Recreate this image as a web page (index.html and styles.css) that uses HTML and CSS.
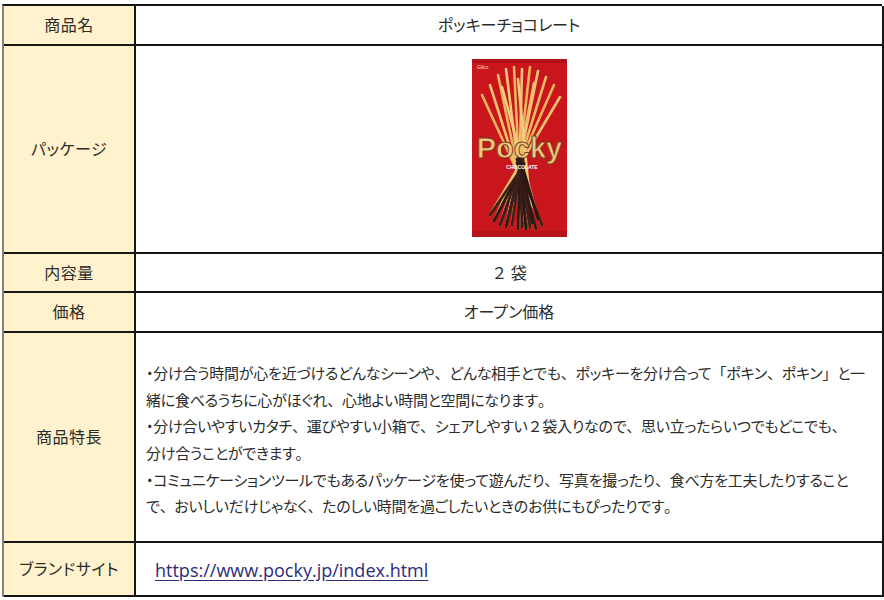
FILE: index.html
```html
<!DOCTYPE html>
<html lang="ja">
<head>
<meta charset="utf-8">
<title>ポッキーチョコレート</title>
<link rel="stylesheet" href="styles.css">
</head>
<body>
<div class="spec">
  <div class="label row-name">商品名</div>
  <div class="value center row-name">ポッキーチョコレート</div>

  <div class="label row-pkg">パッケージ</div>
  <div class="value center row-pkg">
    <svg class="pkg" width="95" height="178" viewBox="0 0 95 178" aria-label="Pocky package">
      <rect x="0" y="0" width="95" height="178" fill="#c9161d"/>
      <rect x="0" y="0" width="95" height="4" fill="#b01218"/>
      <rect x="0" y="172" width="95" height="6" fill="#b51319"/>
      <g stroke-linecap="round" stroke-width="2.6">
        <line x1="10" y1="36" x2="70" y2="166" stroke="#e8b45a"/>
        <line x1="18" y1="26" x2="64" y2="170" stroke="#f0c070"/>
        <line x1="26" y1="16" x2="58" y2="168" stroke="#e9b862"/>
        <line x1="34" y1="10" x2="54" y2="170" stroke="#f2c77a"/>
        <line x1="42" y1="8" x2="50" y2="168" stroke="#eab55d"/>
        <line x1="50" y1="10" x2="46" y2="170" stroke="#f0c274"/>
        <line x1="58" y1="8" x2="40" y2="166" stroke="#e7b25a"/>
        <line x1="66" y1="12" x2="34" y2="168" stroke="#f1c576"/>
        <line x1="74" y1="18" x2="28" y2="166" stroke="#ebb962"/>
        <line x1="82" y1="26" x2="22" y2="162" stroke="#e9b45a"/>
        <line x1="88" y1="38" x2="18" y2="156" stroke="#efbf6e"/>
        <line x1="30" y1="28" x2="66" y2="160" stroke="#f3ca80"/>
        <line x1="62" y1="24" x2="36" y2="160" stroke="#efbf6e"/>
        <line x1="46" y1="20" x2="60" y2="164" stroke="#f3ca80"/>
      </g>
      <g stroke-linecap="round" stroke-width="2.8">
        <line x1="45" y1="104" x2="70" y2="166" stroke="#3a1f1a"/>
        <line x1="45" y1="100" x2="64" y2="170" stroke="#2e1814"/>
        <line x1="46" y1="100" x2="58" y2="168" stroke="#3d2119"/>
        <line x1="47" y1="98" x2="54" y2="170" stroke="#2a1612"/>
        <line x1="48" y1="100" x2="50" y2="168" stroke="#3a1f1a"/>
        <line x1="48" y1="98" x2="46" y2="170" stroke="#2e1814"/>
        <line x1="49" y1="100" x2="40" y2="166" stroke="#3d2119"/>
        <line x1="50" y1="100" x2="34" y2="168" stroke="#2a1612"/>
        <line x1="51" y1="100" x2="28" y2="166" stroke="#3a1f1a"/>
        <line x1="52" y1="104" x2="22" y2="162" stroke="#2e1814"/>
        <line x1="52" y1="106" x2="18" y2="156" stroke="#3d2119"/>
        <line x1="50" y1="106" x2="66" y2="160" stroke="#2a1612"/>
        <line x1="49" y1="106" x2="36" y2="160" stroke="#3a1f1a"/>
        <line x1="49" y1="104" x2="60" y2="164" stroke="#2e1814"/>
      </g>
      <text x="5" y="10" font-family="Liberation Sans, sans-serif" font-size="5" font-style="italic" fill="#f5e0c0">Glico</text>
      <text x="47.5" y="99" text-anchor="middle" font-family="Liberation Sans, sans-serif" font-weight="bold" font-size="29" fill="#f1c77e" stroke="#7a3b1a" stroke-width="0.9">Pocky</text>
      <text x="50" y="110" text-anchor="middle" font-family="Liberation Sans, sans-serif" font-weight="bold" font-size="5" fill="#ffffff">CHOCOLATE</text>
    </svg>
  </div>

  <div class="label row-qty">内容量</div>
  <div class="value center-plain row-qty">２ 袋</div>

  <div class="label row-price">価格</div>
  <div class="value center row-price">オープン価格</div>

  <div class="label row-feat">商品特長</div>
  <div class="value feat row-feat">
    <p>・分け合う時間が心を近づけるどんなシーンや<span class="p">、</span>どんな相手とでも<span class="p">、</span>ポッキーを分け合って<span class="p">「</span>ポキン<span class="p">、</span>ポキン<span class="p">」</span>と一<br>緒に食べるうちに心がほぐれ<span class="p">、</span>心地よい時間と空間になります<span class="p">。</span><br>・分け合いやすいカタチ<span class="p">、</span>運びやすい小箱で<span class="p">、</span>シェアしやすい<span class="p">２</span>袋入りなので<span class="p">、</span>思い立ったらいつでもどこでも<span class="p">、</span><br>分け合うことができます<span class="p">。</span><br>・コミュニケーションツールでもあるパッケージを使って遊んだり<span class="p">、</span>写真を撮ったり<span class="p">、</span>食べ方を工夫したりすること<br>で<span class="p">、</span>おいしいだけじゃなく<span class="p">、</span>たのしい時間を過ごしたいときのお供にもぴったりです<span class="p">。</span></p>
  </div>

  <div class="label row-site">ブランドサイト</div>
  <div class="value site row-site"><a class="link" href="#">https://www.pocky.jp/index.html</a></div>
</div>
</body>
</html>
```

FILE: styles.css
```css
html, body {
  margin: 0;
  padding: 0;
  background: #ffffff;
}

body {
  padding: 4px 2px 0 2px;
  font-family: "Noto Sans CJK JP", "Noto Sans", sans-serif;
  color: #2b2b2b;
}

.spec {
  width: 880px;
  display: grid;
  grid-template-columns: 132px 748px;
  grid-template-rows: 40px 208px 39px 40px 210px 54px;
  border-top: 2px solid #151515;
  border-left: 2px solid #8a8270;
  box-sizing: border-box;
}

.label,
.value {
  border-right: 2px solid #151515;
  border-bottom: 2px solid #151515;
  display: flex;
  align-items: center;
  box-sizing: border-box;
}

.label {
  background: #fff2cc;
  justify-content: center;
  font-size: 16px;
  font-feature-settings: "palt";
  letter-spacing: 0.5px;
  padding-bottom: 2px;
}

.value {
  background: #ffffff;
  font-size: 16px;
}

.center {
  justify-content: center;
  font-feature-settings: "palt";
  padding-bottom: 3px;
}

.center-plain {
  justify-content: center;
  padding-bottom: 2px;
}

.pkg {
  display: block;
  margin-left: 20px;
}

.feat {
  padding-left: 10px;
  padding-top: 6px;
}

.feat p {
  margin: 0;
  font-size: 15px;
  line-height: 26.6px;
  white-space: nowrap;
  font-feature-settings: "palt";
  letter-spacing: -0.25px;
}

.feat .p {
  font-feature-settings: normal;
}

.site {
  padding-left: 19px;
  padding-top: 2px;
}

.link {
  font-family: "Open Sans", "Noto Sans", sans-serif;
  font-size: 18px;
  color: #2c2c78;
  text-decoration: underline;
  text-underline-offset: 3px;
}
```
